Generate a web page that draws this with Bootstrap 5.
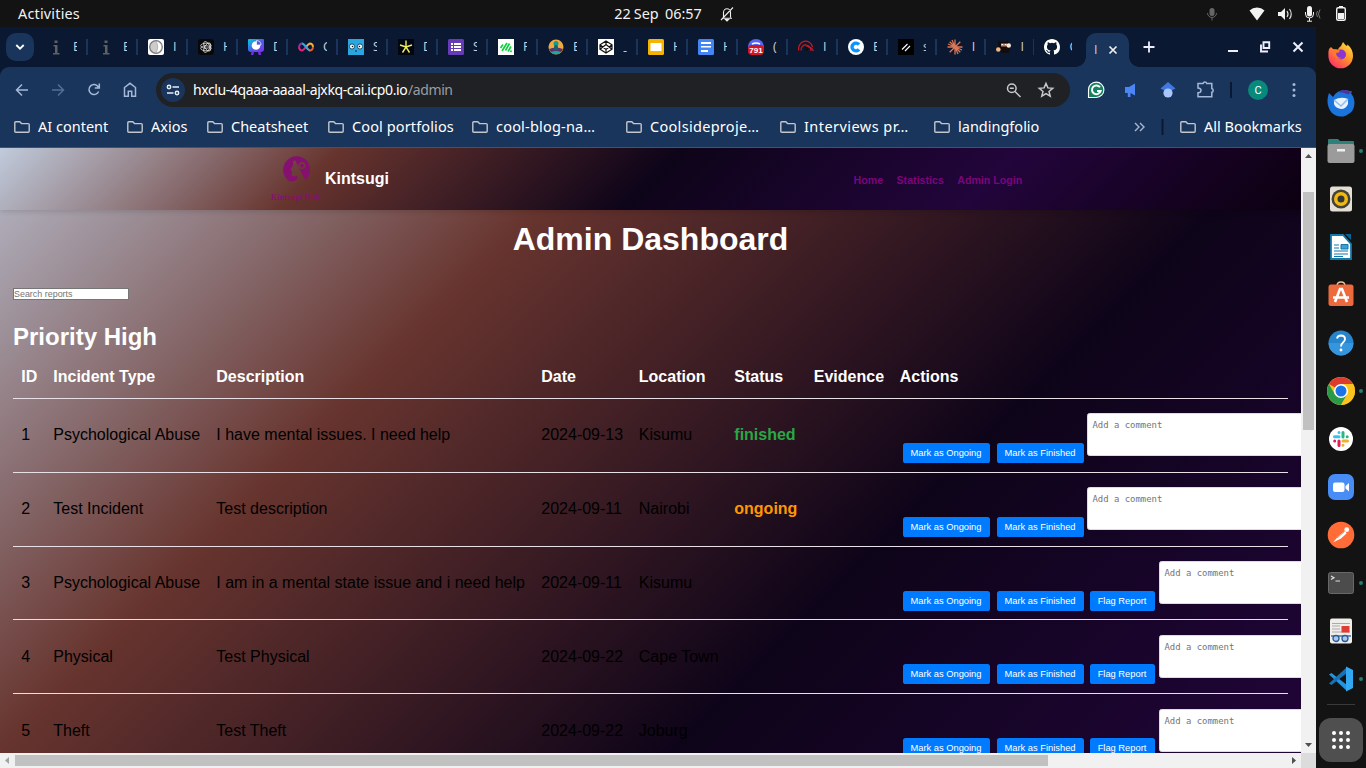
<!DOCTYPE html>
<html lang="en">
<head>
<meta charset="utf-8">
<title>Admin Dashboard</title>
<meta name="viewport" content="width=device-width, initial-scale=1">
<link href="https://cdn.jsdelivr.net/npm/bootstrap@5.3.0/dist/css/bootstrap.min.css" rel="stylesheet">
<style>
html,body{height:768px;overflow:hidden}
body{width:1366px;background:#131313;font-family:"Noto Sans","Open Sans",sans-serif;line-height:1.2;color:#fff}
svg{display:block;flex:none}
.topbar{height:27px;font-size:14.4px;background:#131313;color:#f2f2f2;display:grid;grid-template-columns:1fr auto 1fr}
.browser{width:1316px;height:741px}
.strip{height:40px;background:#0a1931;padding-left:6px}
.tabmenu{width:28px;height:28px;border-radius:10px;background:#1a355b;margin-right:4px}
.tb{width:50px;height:40px;padding-left:10px;flex:none}
.tb:nth-child(n+18){width:48.8px}
.tb .ttl{width:4.5px;overflow:hidden;font:12.5px/16px "Open Sans",sans-serif;margin-left:9px;color:#c9d1de;height:16px;white-space:nowrap}
.tb .sepr{width:2px;height:16px;background:#1a355b;margin-left:9.5px}
.tb:nth-last-child(1) .sepr{visibility:hidden}
.activetab{width:43px;height:34px;margin-top:6px;border-radius:10px 10px 0 0;background:#1a355b;padding-left:8px;position:relative}
.activetab::before,.activetab::after{content:"";position:absolute;bottom:0;width:10px;height:10px}
.activetab::before{left:-10px;background:radial-gradient(circle at 0 0,transparent 9.5px,#1a355b 10px)}
.activetab::after{right:-10px;background:radial-gradient(circle at 100% 0,transparent 9.5px,#1a355b 10px)}
.tools{height:46px;background:#1a355b;border-radius:9px 9px 0 0;padding-left:14px}
.toolwrap{background:#0a1931}
.omni{width:914px;height:34px;border-radius:17px;background:#202124;margin-left:18px;padding-left:5px;font-size:14px;white-space:nowrap}
.chip{width:24px;height:24px;border-radius:50%;background:#1a355b}
.bm{height:35px;background:#1a355b;border-bottom:1px solid #3a5475;font-size:14.5px;padding:0 0 6px 14px;white-space:nowrap}
.bm>div{flex:none}
.bm span{margin-left:8px}
.view{width:1301px;height:605px;overflow:hidden;font-family:"Liberation Sans",Arial,sans-serif;background:linear-gradient(135deg,#c0cbdc 0%,#67342e 25%,#0e0419 50%,#22053b 75%,#0c0010 100%) 0 -74px/1301px 1395px no-repeat}
.sitenav{height:62px;background:linear-gradient(135deg,#c0cbdc 0%,#67342e 25%,#0e0419 50%,#22053b 75%,#0c0010 100%);box-shadow:0 2px 5px rgba(0,0,0,.12);padding-left:270px}
.logo{width:51px}
.logo small{font:bold 7.8px/8px "Liberation Serif",serif;color:#86106f;white-space:nowrap;letter-spacing:.35px;margin:10px 0 0 1px;display:block}
.brandname{font-size:16px;font-weight:700;margin-left:4px;line-height:18px}
.links{font-size:10.67px;font-weight:700;gap:13.3px;margin-left:464.6px;padding-top:3px}
.links a{color:#7d047d;text-decoration:none}
.view h1{font-size:32px;font-weight:700;line-height:37px;margin:11px 0 0}
.search{width:116px;height:12px;border:1px solid #767676;border-radius:0;padding:0;font-size:8.93px;line-height:10px;min-height:0;background:#fff;display:block}
.search::placeholder,.note::placeholder{color:#757575;opacity:1}
.view h2{font-size:24px;font-weight:700;line-height:28px;margin:23px 0 0}
.reports{width:1275px;table-layout:fixed;font-size:16px;line-height:18px;margin:0;--bs-table-bg:transparent}
.reports>:not(caption)>*>*{border-bottom:1px solid #e9dfe6;padding:0 8px 0 8.3px;white-space:nowrap;background:none;box-shadow:none;vertical-align:middle}
.reports>thead>tr>th{height:47px;color:#fff;font-weight:700;padding-top:5px}
.reports>tbody>tr>td{height:74px;color:#000}
.reports>tbody>tr:nth-child(3)>td{height:73px}
.reports>tbody>tr:nth-child(n+4)>td{padding-top:2px}
.reports>tbody>tr>td:last-child{padding:0 0 0 11px!important;vertical-align:top}
.acts{height:72px;padding-top:14px;width:700px}
.btn-act{width:87px;height:20px;padding:0;border:0;border-radius:2.6px;background:#007bff;color:#fff;font-size:9.33px;line-height:20px;margin-top:30px}
.note{width:267px;height:43px;flex:none;border:1px solid #ddd;border-radius:2.6px;padding:5px;font:8.93px/12px "DejaVu Sans Mono",monospace;min-height:0;resize:none;background:#fff;overflow:hidden}
tr:nth-child(n+4) .note{margin-top:1px}
.vs{width:15px;height:605px;background:#f1f1f1}
.vs .thumb{width:11px;height:238px;background:#c1c1c1;margin-top:29px}
.hs{height:15px;background:#f1f1f1}
.hs .thumb{width:1033px;height:11px;background:#c1c1c1}
.dock{width:50px;height:741px;background:#131313;padding-top:4px}
.dock .it{height:48px;width:50px;position:relative}
.run::after{content:"";position:absolute;right:3px;top:22px;width:4px;height:4px;border-radius:50%;background:#2b7a73}
.apps{width:44px;height:44px;border-radius:12px;background:#4f4f4f;margin-top:13px}
</style>
</head>
<body class="d-flex flex-column">
<header class="topbar align-items-center">
  <div style="padding-left:18px"><span style="letter-spacing:.2px">Activities</span></div>
  <div class="d-flex align-items-center" style="margin-right:17px"><span style="word-spacing:-.6px">22 Sep&nbsp; 06:57</span>
    <svg width="16" height="16" viewBox="0 0 16 16" style="margin-left:17px" fill="none" stroke="#eee" stroke-width="1.1"><path d="M3 12.2h10M4.500 11.500V6.500a3.500 3.800 0 0 1 7 0v5M2 14 14 1.500"/><path d="M6.500 13.500h3l-1.500 1.500z" fill="#eee"/></svg></div>
  <div class="d-flex justify-content-end align-items-center">
    <svg width="160" height="26" viewBox="0 0 160 26"><g fill="#666"><rect x="3.500" y="7" width="5" height="8" rx="2.500"/><path d="M1.500 12a4.500 4.500 0 0 0 9 0M6 16.500v3" fill="none" stroke="#666"/></g>
    <path d="M43.500 9.500a11 11 0 0 1 15 0L51 19.500z" fill="#f2f2f2"/>
    <path d="M72 11h3l4-4v12l-4-4h-3z" fill="#f2f2f2"/><path d="M81 10q2 3 0 6M83.500 8q3.500 5 0 10" stroke="#ddd" fill="none" stroke-width="1.200"/>
    <rect x="101" y="5" width="5" height="10.500" rx="2.500" fill="#f2f2f2"/><path d="M99.500 11v2a4 4 0 0 0 8 0v-2M103.500 17v3M101 20.200h5" stroke="#f2f2f2" fill="none"/><path d="M111.500 10q-2 3 0 6M114 8.500q-3 4.500 0 9" stroke="#777" fill="none"/>
    <rect x="130.700" y="6.700" width="8.600" height="12.600" rx="1.500" fill="none" stroke="#f2f2f2" stroke-width="1.400"/><path d="M133 5h4v2h-4zM132 12h6v6h-6z" fill="#f2f2f2"/></svg>
  </div>
</header>
<main class="d-flex">
<section class="browser d-flex flex-column">
  <div class="strip d-flex align-items-center">
    <div class="tabmenu d-flex align-items-center justify-content-center"><svg width="10" height="8" viewBox="0 0 10 8"><path d="M1.300 2 5 5.700 8.700 2" fill="none" stroke="#fff" stroke-width="1.800"/></svg></div>
    <div class="d-flex">
    <div class="tb d-flex align-items-center"><svg width="16" height="16"><path d="M6.500 1.500h3v2.500h-3zM5.500 6h4v8h2v1.500H5V14h2V7.500H5.500z" fill="#5e6063"/></svg><span class="ttl">E</span><i class="sepr"></i></div>
    <div class="tb d-flex align-items-center"><svg width="16" height="16"><path d="M6.500 1.500h3v2.500h-3zM5.500 6h4v8h2v1.500H5V14h2V7.500H5.500z" fill="#5e6063"/></svg><span class="ttl">E</span><i class="sepr"></i></div>
    <div class="tb d-flex align-items-center"><svg width="16" height="16"><rect width="16" height="16" rx="2" fill="#fff"/><circle cx="8" cy="8" r="6.300" fill="#ccc" stroke="#777" stroke-width="1.200"/><path d="M8 2.300a5.700 5.700 0 0 1 0 11.400q3.500-6 0-11.400" fill="#fff" stroke="#999" stroke-width=".6"/></svg><span class="ttl">I</span><i class="sepr"></i></div>
    <div class="tb d-flex align-items-center"><svg width="16" height="16"><rect width="16" height="16" rx="3" fill="#080808"/><g fill="none" stroke="#ddd" stroke-width=".8" transform="translate(8 8)"><ellipse rx="5.300" ry="2.500" cy="-1.300"/><ellipse rx="5.300" ry="2.500" cy="-1.300" transform="rotate(60)"/><ellipse rx="5.300" ry="2.500" cy="-1.300" transform="rotate(120)"/><ellipse rx="5.300" ry="2.500" cy="-1.300" transform="rotate(180)"/></g></svg><span class="ttl">H</span><i class="sepr"></i></div>
    <div class="tb d-flex align-items-center"><svg width="16" height="16"><defs><linearGradient id="ga" x2="1" y2="1"><stop stop-color="#00d0df"/><stop offset=".5" stop-color="#4a60e8"/><stop offset="1" stop-color="#8b2cf0"/></linearGradient></defs><path d="M1 0h14a1 1 0 0 1 1 1v9q0 3-3 3H3q-3 0-3-3V1q0-1 1-1z" fill="url(#ga)"/><path d="M5 12 4 16M11 12l1 4" stroke="#7a2ce8" stroke-width="2.500"/><circle cx="8" cy="6.500" r="4.300" fill="#fff"/><path d="M8.500 6V1.500q4.500.5 4.500 4.500z" fill="#5a50e8" stroke="#fff" stroke-width=".7"/></svg><span class="ttl">D</span><i class="sepr"></i></div>
    <div class="tb d-flex align-items-center"><svg width="16" height="16" fill="none" stroke-width="2"><path d="M8 8C6 5.500 5 4.500 3.800 4.500a3.400 3.400 0 0 0-2.600 3.500" stroke="#9b2ba0"/><path d="M1.200 8a3 3 0 0 0 2.600 3.500C5.500 11.500 7 9 8 8" stroke="#ed1e79"/><path d="M8 8c2-2.500 3-3.500 4.200-3.500A3 3 0 0 1 14.800 8" stroke="#fbb03b"/><path d="M14.800 8a3 3 0 0 1-2.600 3.500C10.500 11.500 9 9 8 8" stroke="#f15a24"/><path d="M4 4.600q1.500 0 4 3.400t4 3.400" stroke="#29abe2"/></svg><span class="ttl">C</span><i class="sepr"></i></div>
    <div class="tb d-flex align-items-center"><svg width="16" height="16"><path d="M0 0h16v16H0z" fill="#2aa7df"/><circle cx="4" cy="7.500" r="2.600" fill="#fff" stroke="#1b4d6b"/><circle cx="12" cy="7.500" r="2.600" fill="#fff" stroke="#1b4d6b"/><circle cx="4.500" cy="7.500" r=".8" fill="#111"/><circle cx="11.500" cy="7.500" r=".8" fill="#111"/><path d="M7 12h2" stroke="#124"/></svg><span class="ttl">S</span><i class="sepr"></i></div>
    <div class="tb d-flex align-items-center"><svg width="16" height="16"><path d="M0 0h16v16H0z" fill="#04060f"/><path d="M8 1.500V8M2 6l6 2 6-2M4.500 13.500 8 8l3.500 5.500" fill="none" stroke="#f2ee62" stroke-width="1.400"/></svg><span class="ttl">D</span><i class="sepr"></i></div>
    <div class="tb d-flex align-items-center"><svg width="16" height="16"><rect width="16" height="16" rx="1.500" fill="#673ab7"/><path d="M3 4h2v2H3zm3 0h7v2H6zM3 7h2v2H3zm3 0h7v2H6zM3 10h2v2H3zm3 0h7v2H6z" fill="#fff"/></svg><span class="ttl">S</span><i class="sepr"></i></div>
    <div class="tb d-flex align-items-center"><svg width="16" height="16"><path d="M0 0h16v16H0z" fill="#fff"/><path d="M2.500 9 5 5.500M4 12l5-8M7.500 11.500l4-7M10 12.500l3-5M12.500 13l1-1.500" stroke="#0fd13f" stroke-width="1.700"/></svg><span class="ttl">F</span><i class="sepr"></i></div>
    <div class="tb d-flex align-items-center"><svg width="16" height="16"><circle cx="8" cy="8" r="7.500" fill="#f0a93f"/><path d="M1 10q7-3 14 0a7.500 7.500 0 0 1-14 0" fill="#58336e"/><path d="M3 13q5-2 10 0-5 4.500-10 0" fill="#1fa7a3"/><circle cx="8" cy="4.500" r="2.500" fill="#159a96"/><path d="M6.500 6h3l1 5h-5z" fill="#14636d"/></svg><span class="ttl">E</span><i class="sepr"></i></div>
    <div class="tb d-flex align-items-center"><svg width="16" height="16"><path d="M0 0h16v16H0z" fill="#fff"/><path d="m8 2 6 3.800v4.400L8 14l-6-3.800V5.800zM8 2v3.600M8 14v-3.600M2 5.800l6 4.600 6-4.600M2 10.200l6-4.600 6 4.600" fill="none" stroke="#111" stroke-width="1.200"/></svg><span class="ttl" style="margin-top:7px">-</span><i class="sepr"></i></div>
    <div class="tb d-flex align-items-center"><svg width="16" height="16"><rect width="16" height="16" rx="1.500" fill="#f5b400"/><path d="M2.500 4h11v8h-11z" fill="#fff"/></svg><span class="ttl">H</span><i class="sepr"></i></div>
    <div class="tb d-flex align-items-center"><svg width="16" height="16"><rect width="16" height="16" rx="1.500" fill="#4285f4"/><path d="M3 3h10v2H3zm0 4h10v1.500H3zm0 4h7v2H3z" fill="#fff"/></svg><span class="ttl">H</span><i class="sepr"></i></div>
    <div class="tb d-flex align-items-center"><svg width="16" height="16"><circle cx="8" cy="8" r="8" fill="#5865f2"/><path d="M4 5q4-2 8 0" stroke="#fff" stroke-width="1.500" fill="none"/><rect y="6" width="16" height="10" rx="4" fill="#d5161f"/><text x="8" y="14.300" text-anchor="middle" font-size="8" font-weight="700" fill="#fff" font-family="Liberation Sans">791</text></svg><span class="ttl">(</span><i class="sepr"></i></div>
    <div class="tb d-flex align-items-center"><svg width="16" height="16" fill="none" stroke="#d11622" stroke-width="1.200"><path d="M.8 11.500A7 7.500 0 0 1 14.500 8M3 11.500A5 5.500 0 0 1 8 5.700M8 8q5-1 7.500 4M8 6q5 1 5 6"/><path d="M7 8h3v4H7z" fill="#111" stroke="none"/></svg><span class="ttl">I</span><i class="sepr"></i></div>
    <div class="tb d-flex align-items-center"><svg width="16" height="16"><circle cx="8" cy="8" r="8" fill="#fff"/><path d="M11 5.600A3.900 3.900 0 1 0 11 10.400" fill="none" stroke="#0a94ff" stroke-width="3.400"/></svg><span class="ttl">E</span><i class="sepr"></i></div>
    <div class="tb d-flex align-items-center"><svg width="16" height="16"><path d="M0 0h16v16H0z" fill="#000"/><path d="m4 10.500 5.500-5.500M7 12l5-5" stroke="#fff" stroke-width="1.100"/></svg><span class="ttl">s</span><i class="sepr"></i></div>
    <div class="tb d-flex align-items-center"><svg width="16" height="16" stroke="#d97757" stroke-width="1.300"><path d="M8 .5v15M.5 8h15M2.700 2.700l10.600 10.600M13.300 2.700 2.700 13.300M5 1l6 14M1 5l14 6"/></svg><span class="ttl">I</span><i class="sepr"></i></div>
    <div class="tb d-flex align-items-center"><svg width="16" height="16"><path d="M2 1.500 5 3h4l3-1.500 1 4.500 1 3-1 5H6l-4-4z" fill="#130c0c"/><path d="M5 4.500h6v3H5z" fill="#c98563"/><circle cx="12.800" cy="6.500" r="2.200" fill="#f5e8d8"/><circle cx="2.300" cy="10.500" r="2.300" fill="#f3b582"/><path d="M5.500 5.500h1.500M9 5.500h1.500" stroke="#fff"/></svg><span class="ttl">I</span><i class="sepr"></i></div>
    <div class="tb d-flex align-items-center"><svg width="16" height="16"><path fill="#fff" d="M8 0C3.580 0 0 3.580 0 8c0 3.540 2.290 6.530 5.470 7.590.4.070.55-.17.55-.38 0-.19-.01-.82-.01-1.490-2.010.37-2.530-.49-2.690-.94-.09-.23-.48-.94-.82-1.130-.28-.15-.68-.52-.01-.53.63-.01 1.080.58 1.230.82.72 1.210 1.870.87 2.330.66.07-.52.28-.87.51-1.070-1.780-.2-3.640-.89-3.640-3.950 0-.87.31-1.590.82-2.150-.08-.2-.36-1.020.08-2.120 0 0 .67-.21 2.200.82a7.600 7.600 0 0 1 4 0c1.530-1.040 2.200-.82 2.200-.82.44 1.100.16 1.920.08 2.120.51.56.82 1.270.82 2.150 0 3.070-1.870 3.750-3.650 3.950.29.25.54.73.54 1.480 0 1.070-.01 1.930-.01 2.200 0 .21.15.46.55.38A8 8 0 0 0 16 8c0-4.420-3.580-8-8-8"/></svg><span class="ttl" style="width:3px">C</span><i class="sepr"></i></div>
    </div>
    <div class="activetab d-flex align-items-center" style="margin-left:2.800px"><span style="width:4px;overflow:hidden;font:12.500px/16px 'Open Sans',sans-serif;color:#c9d1de">I</span><svg width="10" height="10" style="margin-left:10px"><path d="m1.500 1.500 7 7m0-7-7 7" stroke="#eee" stroke-width="1.700"/></svg></div>
    <svg width="187" height="40" viewBox="1129 27 187 40" fill="none" stroke="#eef" stroke-width="1.800"><path d="M1143.500 47h11M1149 41.500v11M1228 51h10"/><path d="M1293.500 42.500l9 9m0-9-9 9" stroke-width="2"/><path d="M1263.500 42.300h5.700v5.700h-5.700zM1261 44.500v7h7" stroke-width="1.900"/></svg>
  </div>
  <div class="toolwrap"><div class="tools d-flex align-items-center">
    <svg width="124" height="20" viewBox="14 80 124 20" fill="none" stroke="#a5b8d8" stroke-width="1.500"><path d="M28 90H17M22 84.500 16.500 90l5.500 5.500"/><path d="M52 90h11M58 84.500l5.500 5.500-5.500 5.500" stroke="#546f94"/><path d="M98.300 87a5 5 0 1 0 .3 4.500M99.300 83.500V88h-4.500"/><path d="M124.500 96.200V87.500l5.500-4.200 5.500 4.200v8.700h-3.800v-5h-3.400v5z"/></svg>
    <div class="omni d-flex align-items-center">
      <div class="chip d-flex align-items-center justify-content-center"><svg width="14" height="12" viewBox="0 0 14 12" fill="none" stroke="#e6ebf5" stroke-width="1.500"><circle cx="3" cy="3" r="1.700"/><path d="M6.500 3H13M1 9h6.500"/><circle cx="11" cy="9" r="1.700"/></svg></div>
      <span style="margin-left:8px;width:215px;letter-spacing:-.38px">hxclu-4qaaa-aaaal-ajxkq-cai.icp0.io</span><span style="color:#9a9da3;letter-spacing:-.4px">/admin</span>
      <svg class="ms-auto" style="margin-right:10px" width="60" height="20" viewBox="1000 80 60 20" fill="none" stroke="#c7c9cc" stroke-width="1.500"><circle cx="1011.800" cy="88.200" r="4.300"/><path d="M1015 91.500l5.500 5.500M1009.800 88.200h4"/><path d="m1046 83.500 1.900 4.400 4.800.4-3.700 3.100 1.200 4.700-4.200-2.500-4.200 2.500 1.200-4.700-3.700-3.100 4.800-.4z"/></svg>
    </div>
    <svg width="246" height="34" viewBox="1070 73 246 34">
      <path d="M1088.500 97.500V90a7.700 7.700 0 1 1 7.700 7.500z" fill="#15835f" stroke="#fff" stroke-width="1.100"/><path d="M1100 87.300a4.400 4.400 0 1 0 .6 3.700h-3.600" fill="none" stroke="#fff" stroke-width="2"/>
      <path d="M1125 87h4l6-3.500v12l-4.500-2.500v4h-2.700v-4h-2.800z" fill="#4c86f5"/>
      <path d="m1168 82 7.500 6.500-7.500 4-7.500-4z" fill="#3f78e0"/><circle cx="1168" cy="93" r="4.600" fill="#a9c6fa"/>
      <path d="M1198 83.500h5a2 2 0 0 1 3.800 0h5v5a2 2 0 0 1 0 3.800v4.500h-13.800v-4q3-.2 3-2.400t-3-2.400z" fill="none" stroke="#a5b8d8" stroke-width="1.500"/>
      <path d="M1230 82h2v16h-2z" fill="#0a1931"/><circle cx="1258" cy="90" r="10" fill="#07897b"/><text x="1258" y="94" text-anchor="middle" font-size="11" fill="#fff" font-family="Roboto">C</text>
      <g fill="#a5b8d8"><circle cx="1294" cy="84.500" r="1.500"/><circle cx="1294" cy="90" r="1.500"/><circle cx="1294" cy="95.500" r="1.500"/></g></svg>
  </div></div>
  <svg width="0" height="0" class="position-absolute"><symbol id="fo" viewBox="0 0 16 12"><path d="M.8 10.200V1.800q0-1 1-1h4l1.700 1.800h6.700q1 0 1 1v6.600q0 1-1 1H1.800q-1 0-1-1z" fill="none" stroke="#c3c6cb" stroke-width="1.400"/></symbol></svg>
  <div class="bm d-flex align-items-center">
    <div class="d-flex align-items-center" style="width:113px"><svg width="16" height="12"><use href="#fo"/></svg><span>AI content</span></div>
    <div class="d-flex align-items-center" style="width:80px"><svg width="16" height="12"><use href="#fo"/></svg><span>Axios</span></div>
    <div class="d-flex align-items-center" style="width:121px"><svg width="16" height="12"><use href="#fo"/></svg><span>Cheatsheet</span></div>
    <div class="d-flex align-items-center" style="width:144px"><svg width="16" height="12"><use href="#fo"/></svg><span style="letter-spacing:.12px">Cool portfolios</span></div>
    <div class="d-flex align-items-center" style="width:154px"><svg width="16" height="12"><use href="#fo"/></svg><span style="letter-spacing:.2px">cool-blog-na…</span></div>
    <div class="d-flex align-items-center" style="width:154px"><svg width="16" height="12"><use href="#fo"/></svg><span style="letter-spacing:.3px">Coolsideproje…</span></div>
    <div class="d-flex align-items-center" style="width:154px"><svg width="16" height="12"><use href="#fo"/></svg><span style="letter-spacing:.45px">Interviews pr…</span></div>
    <div class="d-flex align-items-center" style="width:200px"><svg width="16" height="12"><use href="#fo"/></svg><span>landingfolio</span></div>
    <svg width="46" height="16"><path d="m1 4 4 4-4 4M6 4l4 4-4 4" fill="none" stroke="#a5b8d8" stroke-width="1.400"/><path d="M27.500 0h2v16h-2z" fill="#0a1931"/></svg>
    <div class="d-flex align-items-center"><svg width="16" height="12"><use href="#fo"/></svg><span>All Bookmarks</span></div>
  </div>
  <div class="d-flex">
    <div class="view">
      <nav class="sitenav d-flex align-items-center">
        <div class="logo"><svg width="28" height="28" viewBox="0 0 28 28" style="margin-left:11.500px"><path fill-rule="evenodd" d="M8 25.500A13.500 13.500 0 1 1 23.500 24L21 20 16 9.500 13 4l-2 1.500v4L8.500 13.500 10 15l-.5 4 1.500 1.500 4-.5.500 3-3 2zM20 6a3.600 3.600 0 1 0 .1 0z" fill="#86106f"/><circle cx="20" cy="9.600" r="1.900" fill="#86106f"/></svg><small>Kintsugi Hub</small></div>
        <div class="brandname">Kintsugi</div>
        <div class="links d-flex"><a href="#">Home</a><a href="#">Statistics</a><a href="#">Admin Login</a></div>
      </nav>
      <h1 class="text-center">Admin Dashboard</h1>
      <div style="padding:30px 13px 0">
        <input class="search form-control" placeholder="Search reports">
        <h2>Priority High</h2>
        <table class="table reports">
          <colgroup><col style="width:32px"><col style="width:163px"><col style="width:325px"><col style="width:97.500px"><col style="width:95.500px"><col style="width:79.500px"><col style="width:86px"><col></colgroup>
          <thead><tr><th>ID</th><th>Incident Type</th><th>Description</th><th>Date</th><th>Location</th><th>Status</th><th>Evidence</th><th>Actions</th></tr></thead>
          <tbody>
          <tr><td>1</td><td>Psychological Abuse</td><td>I have mental issues. I need help</td><td>2024-09-13</td><td>Kisumu</td><td class="fw-bold" style="color:#28a745">finished</td><td></td><td><div class="acts d-flex"><button class="btn btn-act">Mark as Ongoing</button><button class="btn btn-act" style="margin-left:7px">Mark as Finished</button><textarea class="form-control note" style="margin-left:3px" placeholder="Add a comment"></textarea></div></td></tr>
          <tr><td>2</td><td>Test Incident</td><td>Test description</td><td>2024-09-11</td><td>Nairobi</td><td class="fw-bold" style="color:#ff9800">ongoing</td><td></td><td><div class="acts d-flex"><button class="btn btn-act">Mark as Ongoing</button><button class="btn btn-act" style="margin-left:7px">Mark as Finished</button><textarea class="form-control note" style="margin-left:3px" placeholder="Add a comment"></textarea></div></td></tr>
          <tr><td>3</td><td>Psychological Abuse</td><td>I am in a mental state issue and i need help</td><td>2024-09-11</td><td>Kisumu</td><td></td><td></td><td><div class="acts d-flex"><button class="btn btn-act">Mark as Ongoing</button><button class="btn btn-act" style="margin-left:7px">Mark as Finished</button><button class="btn btn-act" style="width:65px;margin-left:6px">Flag Report</button><textarea class="form-control note" style="margin-left:4px" placeholder="Add a comment"></textarea></div></td></tr>
          <tr><td>4</td><td>Physical</td><td>Test Physical</td><td>2024-09-22</td><td>Cape Town</td><td></td><td></td><td><div class="acts d-flex"><button class="btn btn-act">Mark as Ongoing</button><button class="btn btn-act" style="margin-left:7px">Mark as Finished</button><button class="btn btn-act" style="width:65px;margin-left:6px">Flag Report</button><textarea class="form-control note" style="margin-left:4px" placeholder="Add a comment"></textarea></div></td></tr>
          <tr><td>5</td><td>Theft</td><td>Test Theft</td><td>2024-09-22</td><td>Joburg</td><td></td><td></td><td><div class="acts d-flex"><button class="btn btn-act">Mark as Ongoing</button><button class="btn btn-act" style="margin-left:7px">Mark as Finished</button><button class="btn btn-act" style="width:65px;margin-left:6px">Flag Report</button><textarea class="form-control note" style="margin-left:4px" placeholder="Add a comment"></textarea></div></td></tr>
          </tbody>
        </table>
      </div>
    </div>
    <div class="vs d-flex flex-column align-items-center"><svg width="15" height="15"><path d="M4 10h7L7.500 6z" fill="#505050"/></svg><div class="thumb"></div><svg class="mt-auto" width="15" height="15"><path d="M4 5h7L7.500 9z" fill="#505050"/></svg></div>
  </div>
  <div class="hs d-flex align-items-center"><svg width="15" height="15"><path d="M9 4v7L5 7.500z" fill="#a3a3a3"/></svg><div class="thumb"></div><svg class="ms-auto" width="30" height="15"><path d="M6 4v7l4-3.500z" fill="#505050"/><path d="M15 0h15v15H15z" fill="#dcdcdc"/></svg></div>
</section>
<aside class="dock d-flex flex-column align-items-center">
  <div class="it d-flex align-items-center justify-content-center"><svg width="28" height="28"><defs><linearGradient id="ff" x1="1" y1="0" x2=".2" y2="1"><stop stop-color="#fff04a"/><stop offset=".45" stop-color="#ff9a28"/><stop offset="1" stop-color="#ff2a68"/></linearGradient></defs><path d="M2 8l2-2 2 2 5 1q0-2 3-4l2-4q2 3 4 4 1-1 0-2 6 5 6 12a12.300 12.300 0 0 1-24.600 0q-.4-4 .6-7" fill="url(#ff)"/><circle cx="14" cy="13.500" r="5" fill="#8a35d2"/><path d="M6 9q4-2 7 1-1 2-4 2 0 5 6 5-6 2-9-3z" fill="#ff7d1f"/></svg></div>
  <div class="it d-flex align-items-center justify-content-center"><svg width="28" height="28"><path d="M2 4l4 4Q10 1 18 1l7 1.500-1 2q3.500 4 3.500 9.500a13.500 13.500 0 0 1-23 9.500Q-2 15 2 4" fill="#1a74dc"/><path d="M11 3q7-4 13 .500l-3 2q-4-2.500-10-2.500" fill="#55309a"/><path d="M7 11q7-4 14-1v5q-2 5-7 5-6-1-7-5z" fill="#e8f3ff"/><path d="m7 11 7 6 7-7" fill="none" stroke="#8dbcf0" stroke-width="1.500"/></svg></div>
  <div class="it run d-flex align-items-center justify-content-center"><svg width="28" height="26"><path d="M1 5V2q0-1 1-1h9l2 2h13q1 0 1 1v5H1z" fill="#2f7f7a"/><rect x=".5" y="6" width="27" height="19" rx="2" fill="#9b9b9b"/><path d="M10 11h8v2.500h-8z" fill="#eee"/></svg></div>
  <div class="it d-flex align-items-center justify-content-center"><svg width="24" height="28"><rect x="1" y="1.500" width="22" height="25" rx="2.500" fill="#e3dfd4"/><circle cx="12" cy="14" r="9.500" fill="#454237"/><circle cx="12" cy="14" r="7" fill="#f0b911"/><circle cx="12" cy="14" r="3.500" fill="#353535"/></svg></div>
  <div class="it d-flex align-items-center justify-content-center"><svg width="24" height="28"><path d="M2 2h12l8 9v15H2z" fill="#fff" stroke="#1379aa" stroke-width="1.800"/><path d="M16 1h6v6z" fill="#0c6290"/><path d="M5 12h5M5 15h5M5 18h14M5 21h14M5 23.500h9" stroke="#1379aa" stroke-width="1.200"/><path d="M12 11.500h7v4.500h-7z" fill="#3ca0d0" stroke="#1379aa"/></svg></div>
  <div class="it d-flex align-items-center justify-content-center"><svg width="26" height="28"><path d="M9 5q0-4 4-4t4 4" fill="none" stroke="#e7c59e" stroke-width="1.500"/><rect x=".5" y="3.500" width="25" height="21.500" rx="2.500" fill="#ed6a3c"/><path d="m7 21 5-13h2l5 13M5 16.500h16" fill="none" stroke="#fff" stroke-width="2.600"/></svg></div>
  <div class="it d-flex align-items-center justify-content-center"><svg width="26" height="26"><circle cx="13" cy="13" r="12.500" fill="#2684cc"/><path d="M.6 13h24.800A12.400 12.400 0 0 1 .6 13" fill="#3596dd"/><path d="M9 8.500q.5-3 4-3 4 .2 4 3.500 0 2-2 3.500t-2 4" fill="none" stroke="#fff" stroke-width="1.900"/><circle cx="13" cy="20" r="1.400" fill="#fff"/></svg></div>
  <div class="it run d-flex align-items-center justify-content-center"><svg width="28" height="28"><circle cx="14" cy="14" r="14" fill="#fcc31e"/><path d="M14 14 1.900 7A14 14 0 0 1 26.100 7z" fill="#de3b30"/><path d="M1.900 7A14 14 0 0 0 14 28l6-10.500-12 0z" fill="#2b9a48"/><path d="M14 7h12.100A14 14 0 0 1 14 28l6-10z" fill="#fcc31e"/><circle cx="14" cy="14" r="7" fill="#fff"/><circle cx="14" cy="14" r="5.500" fill="#1a73e8"/></svg></div>
  <div class="it d-flex align-items-center justify-content-center"><svg width="24" height="24"><circle cx="12" cy="12" r="12" fill="#fff"/><g stroke-width="3" stroke-linecap="round"><path d="M10 5.500v.1M5.500 9.700H10" stroke="#36c5f0"/><path d="M14 5.500V10M18.200 9.700v.1" stroke="#2eb67d"/><path d="M14 14h4.500M14 18.200v.1" stroke="#ecb22e"/><path d="M10 14v4.500M5.700 14v.1" stroke="#e01e5a"/></g></svg></div>
  <div class="it d-flex align-items-center justify-content-center"><svg width="26" height="26"><rect width="26" height="26" rx="7" fill="#478df5"/><rect x="5" y="8.500" width="11.500" height="9.500" rx="2" fill="#fff"/><path d="m17.500 12 3.500-3v8.500l-3.500-3z" fill="#fff"/></svg></div>
  <div class="it d-flex align-items-center justify-content-center"><svg width="28" height="28"><circle cx="14" cy="14" r="13.300" fill="#ff6c37"/><path d="M6 21.500 11 15.500l6-5 2 .5.500 1.500-5.500 5z" fill="#fff"/><circle cx="19.700" cy="8.700" r="2.400" fill="#fff"/><path d="m10 17 7-6" stroke="#ff6c37" stroke-width=".8"/></svg></div>
  <div class="it run d-flex align-items-center justify-content-center"><svg width="26" height="24"><rect x=".5" y="1.500" width="25" height="21" rx="2" fill="#4c4c4c" stroke="#686868"/><path d="m3 5 3 1.700L3 8.500M7.500 10H12" fill="none" stroke="#ddd" stroke-width="1.200"/></svg></div>
  <div class="it d-flex align-items-center justify-content-center"><svg width="24" height="28"><rect x="1" y="1.500" width="22" height="25" rx="2" fill="#f0eeea"/><path d="M3 6.500h18M3 9h8M3 12h8M3 15h18" stroke="#aaa" stroke-width="1"/><path d="M12.500 9h8v6.500h-8z" fill="#e03c35"/><g fill="#a9c9ec" stroke="#2a5a99" stroke-width="1.300"><path d="M2 19h20"/><circle cx="7" cy="21.500" r="3"/><circle cx="16" cy="21.500" r="3"/></g></svg></div>
  <div class="it run d-flex align-items-center justify-content-center"><svg width="26" height="26"><path d="M1 8.500 3.500 7 19 19v6z" fill="#2393dc"/><path d="M1 17.500 3.500 19 19 7V1z" fill="#1372b8"/><path d="M18 .500 25 4v18l-7 3.500z" fill="#32a8f3"/></svg></div>
  <div style="width:28px;height:1px;background:#3a3a3a;margin-top:1px"></div>
  <div class="apps d-flex align-items-center justify-content-center"><svg width="18" height="18" fill="#fff"><circle cx="2" cy="2" r="2"/><circle cx="9" cy="2" r="2"/><circle cx="16" cy="2" r="2"/><circle cx="2" cy="9" r="2"/><circle cx="9" cy="9" r="2"/><circle cx="16" cy="9" r="2"/><circle cx="2" cy="16" r="2"/><circle cx="9" cy="16" r="2"/><circle cx="16" cy="16" r="2"/></svg></div>
</aside>
</main>
<script src="https://cdn.jsdelivr.net/npm/bootstrap@5.3.0/dist/js/bootstrap.bundle.min.js"></script>
</body>
</html>
